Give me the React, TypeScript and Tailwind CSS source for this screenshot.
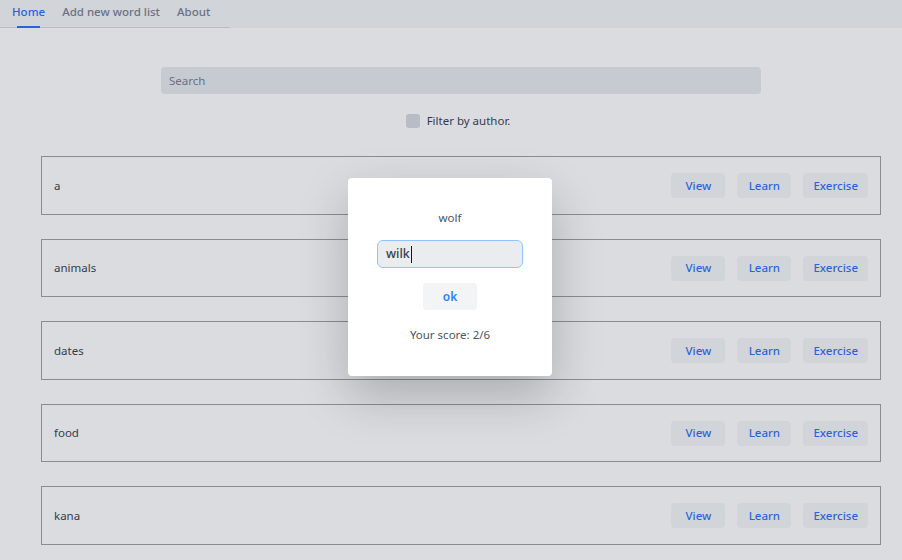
import { useState } from 'react';

const lists = ['a', 'animals', 'dates', 'food', 'kana'];

const font = { fontFamily: '"Segoe UI", "Noto Sans", "Open Sans", sans-serif' };

function ListRow({ name }: { name: string }) {
  return (
    <div className="flex h-[58.5px] items-center justify-between border border-[#949494] pl-3 pr-3">
      <span className="text-[11.5px] text-gray-800">{name}</span>
      <div className="flex gap-3">
        {['View', 'Learn', 'Exercise'].map((label) => (
          <button
            key={label}
            className="h-[25px] min-w-[54px] rounded bg-gray-100 px-[10px] text-[11.5px] font-medium text-blue-600"
          >
            {label}
          </button>
        ))}
      </div>
    </div>
  );
}

export default function App() {
  const [tab] = useState('Home');

  return (
    <div className="relative h-[560px] w-[902px] overflow-hidden bg-white" style={font}>
      {/* Nav */}
      <header className="flex h-[28px] bg-gray-100">
        <nav className="flex h-full w-[230px] gap-[17px] border-b border-gray-300 pl-3">
          {['Home', 'Add new word list', 'About'].map((t) => (
            <div key={t} className="relative flex h-full items-start whitespace-nowrap pt-[3px]">
              <span
                className={
                  t === tab
                    ? 'text-[11.5px] font-medium text-blue-600'
                    : 'text-[11.5px] font-medium text-gray-500'
                }
              >
                {t}
              </span>
              {t === tab && (
                <span className="absolute bottom-[-1px] left-[5px] right-[5px] h-[2px] bg-blue-600" />
              )}
            </div>
          ))}
        </nav>
      </header>

      <main className="pl-[41px] pr-[21px]">
        <div className="flex justify-center pt-[39px]">
          <input
            placeholder="Search"
            className="h-[27px] w-[600px] rounded bg-gray-200 px-2 text-[11.5px] text-gray-700 placeholder:text-gray-500 outline-none"
          />
        </div>
        <label className="mt-[18px] flex items-center justify-center gap-[7px] pr-[6px]">
          <span className="h-[14px] w-[14px] rounded-[3px] bg-gray-300" />
          <span className="text-[11.5px] text-gray-800">Filter by author.</span>
        </label>

        <div className="mt-[27px] flex flex-col gap-6">
          {lists.map((l) => (
            <ListRow key={l} name={l} />
          ))}
        </div>
      </main>

      {/* Modal overlay */}
      <div className="absolute inset-0 flex items-start justify-center bg-gray-500/25 pt-[178px]">
        <div className="ml-[-2px] flex h-[198px] w-[204px] flex-col items-center rounded bg-white shadow-[0_20px_50px_rgba(0,0,0,0.22)]">
          <p className="mt-[31px] text-[11.5px] text-gray-600">wolf</p>
          <div className="mt-[14px] flex h-[28px] w-[146px] items-center rounded-md border border-blue-300 bg-gray-200/80 px-2">
            <span className="text-[12.5px] font-medium text-gray-700">wilk</span>
            <span className="ml-px h-[17px] w-px bg-gray-900" />
          </div>
          <button className="mt-[15px] h-[27px] w-[54px] rounded bg-gray-100 text-[12px] font-semibold text-blue-500">
            ok
          </button>
          <p className="mt-[16px] text-[11.5px] text-gray-600">Your score: 2/6</p>
        </div>
      </div>
    </div>
  );
}
